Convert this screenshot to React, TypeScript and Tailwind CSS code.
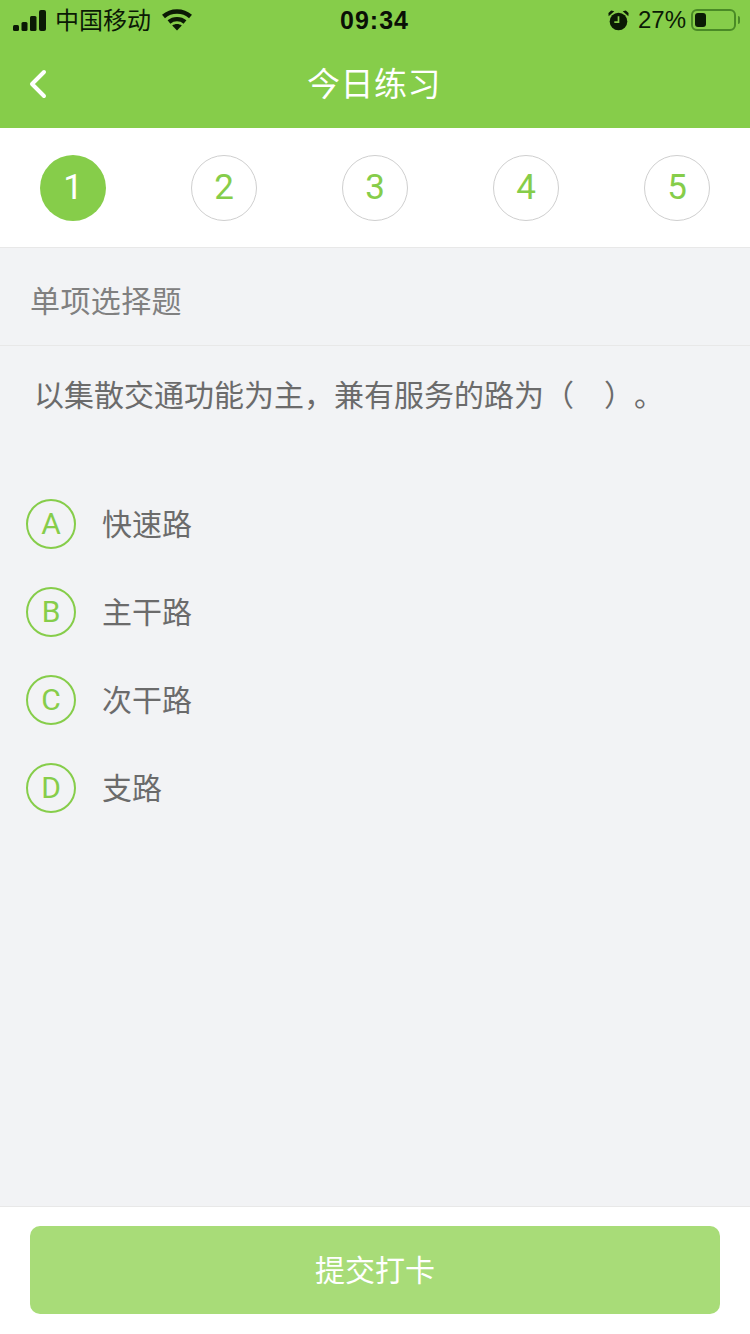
import { ChevronLeft } from "lucide-react";

const sans = "font-['Noto_Sans_CJK_SC','Liberation_Sans',sans-serif]";
const latin = "font-['Liberation_Sans','Noto_Sans_CJK_SC',sans-serif]";
const digits = "font-['Roboto','Liberation_Sans',sans-serif]";

const steps = [1, 2, 3, 4, 5];

const options = [
  { letter: "A", label: "快速路" },
  { letter: "B", label: "主干路" },
  { letter: "C", label: "次干路" },
  { letter: "D", label: "支路" },
];

function StatusBar() {
  return (
    <div className="h-10 flex items-center justify-between pl-[13px] pr-[10px] text-[#0b1a05]">
      <div className="flex items-center w-[280px]">
        <svg width="33" height="21" viewBox="0 0 33 21" fill="currentColor">
          <rect x="0" y="15" width="6" height="6" rx="1.5" />
          <rect x="8.5" y="12" width="6" height="9" rx="1.5" />
          <rect x="17" y="6" width="6.5" height="15" rx="1.5" />
          <rect x="26" y="0" width="7" height="21" rx="2" />
        </svg>
        <span className={`${sans} text-2xl leading-none ml-[9px] pb-[2px]`}>中国移动</span>
        <svg className="ml-[11px]" width="30" height="22" viewBox="0 0 30 22" fill="none" stroke="currentColor" strokeWidth="4.4">
          <path d="M1.5 7.5C9 0.8 21 0.8 28.5 7.5" />
          <path d="M7 13C11.5 9.2 18.5 9.2 23 13" />
          <path d="M15 21.5L10.2 16.6C13 14.6 17 14.6 19.8 16.6Z" fill="currentColor" stroke="none" />
        </svg>
      </div>
      <span className={`${latin} text-[25px] leading-none font-bold tracking-[1px] text-[#0a0f06] mr-1`}>09:34</span>
      <div className="flex items-center justify-end w-[280px]">
        <svg width="21" height="21" viewBox="0 0 20 20" fill="currentColor">
          <circle cx="10" cy="11" r="8.4" />
          <path d="M0.6 6L6 1.2L3 0.4L0.4 2.8Z M19.4 6L14 1.2L17 0.4L19.6 2.8Z" />
          <path d="M10 6V11.5H6" stroke="#86cd4a" strokeWidth="1.6" fill="none" />
        </svg>
        <span className={`${latin} text-2xl leading-none ml-[9px]`}>27%</span>
        <div className="flex items-center ml-[5px]">
          <div className="w-[45px] h-[22px] rounded-[6px] border-2 border-[#4a8a26] p-[2px] flex">
            <div className="w-[11px] bg-[#0b1a05] rounded-[3px]" />
          </div>
          <div className="w-[2px] h-2 ml-[2px] bg-[#4a8a26] rounded-r-sm" />
        </div>
      </div>
    </div>
  );
}

export default function App() {
  return (
    <main className={`h-[1334px] w-[750px] flex flex-col bg-[#f2f3f5] ${sans}`}>
      <header className="bg-[#86cd4a] h-32 shrink-0">
        <StatusBar />
        <div className="h-[88px] relative flex items-center justify-center pb-1 pr-[2px]">
          <ChevronLeft className="absolute left-[14px] top-[20px] text-white" size={48} strokeWidth={2} />
          <span className="text-[33px] leading-none text-white tracking-[0.5px]">今日练习</span>
        </div>
      </header>

      <div className="h-[120px] shrink-0 bg-white border-b border-[#e8e8e8] flex items-center justify-between pl-10 pr-10">
        {steps.map((step) => (
          <div
            key={step}
            className={`w-[66px] h-[66px] rounded-full flex items-center justify-center text-[35px] leading-none ${digits} ${
              step === 1
                ? "bg-[#86cd4a] text-white"
                : "border border-[#cfcfcf] text-[#86cd4a]"
            }`}
          >
            {step}
          </div>
        ))}
      </div>

      <div className="flex-1 flex flex-col">
        <div className="h-[98px] shrink-0 border-b border-[#e8e8e8] flex items-center pl-[30px] pt-1 text-[30px] tracking-[0.4px] leading-none text-[#808080]">
          单项选择题
        </div>
        <p className="pl-[34px] pt-[30px] text-[30px] leading-[34px] text-[#6b6b6b] whitespace-pre">
          以集散交通功能为主，兼有服务的路为（　）<span className="ml-[15px]">。</span>
        </p>
        <div className="flex flex-col gap-[38px] mt-[89px] pl-[26px]">
          {options.map((option) => (
            <div key={option.letter} className="flex items-center">
              <div className={`w-[50px] h-[50px] rounded-full border-2 border-[#86cd4a] flex items-center justify-center text-[30px] leading-none text-[#86cd4a] ${digits}`}>
                {option.letter}
              </div>
              <span className="ml-[26px] pb-1 text-[30px] leading-none text-[#6b6b6b]">{option.label}</span>
            </div>
          ))}
        </div>
      </div>

      <footer className="h-[128px] shrink-0 bg-white border-t border-[#e8e8e8] px-[30px] pt-[19px]">
        <button className="w-full h-[88px] rounded-[10px] bg-[#a8dc78] text-white text-[30px] leading-none pb-1">
          提交打卡
        </button>
      </footer>
    </main>
  );
}
